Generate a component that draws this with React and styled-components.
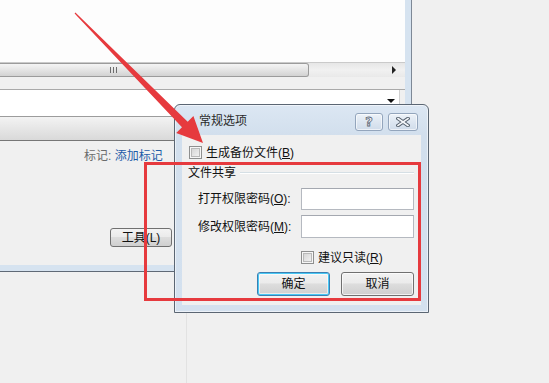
import React from "react";
import styled, { createGlobalStyle } from "styled-components";

const Global = createGlobalStyle`
  html, body { margin: 0; padding: 0; background: #f0f0f0; }
  #root { width: 549px; height: 383px; overflow: hidden; }
`;

const Page = styled.div`
  position: relative;
  width: 549px;
  height: 383px;
  display: flex;
  flex-direction: column;
  background: #f0f0f0;
  overflow: hidden;
  font-family: "Liberation Sans", "Noto Sans CJK SC", sans-serif;
  font-size: 12px;
  color: #1a1a1a;
`;

const TopRow = styled.div`
  display: flex;
  height: 272px;
`;

const DocWindow = styled.div`
  width: 412px;
  height: 272px;
  box-sizing: border-box;
  padding: 0 6px 6px 0;
  background: #d6e3f0;
  border-right: 1px solid #7d8896;
  border-bottom: 1px solid #5f6976;
  display: flex;
`;

const Pane = styled.div`
  flex: 1;
  display: flex;
  flex-direction: column;
  background: #f0f0f0;
`;

const WhiteArea = styled.div`
  height: 62px;
  background: #fdfdfd;
  border-bottom: 1px solid #cacaca;
`;

const HScroll = styled.div`
  height: 14px;
  display: flex;
  background: linear-gradient(#e6e6e6, #f1f1f1 50%, #e9e9e9);
  padding-right: 5px;
`;

const Thumb = styled.div`
  width: 309px;
  box-sizing: border-box;
  border: 1px solid #9b9b9b;
  border-left: none;
  border-radius: 0 3px 3px 0;
  background: linear-gradient(#f4f4f4, #e4e4e4 50%, #d2d2d2);
  display: flex;
  align-items: center;
  padding-left: 110px;
  gap: 2px;
`;

const Grip = styled.span`
  width: 1px;
  height: 6px;
  background: #6c6c6c;
`;

const ScrollSpacer = styled.div`
  flex: 1;
`;

const ScrollArrow = styled.div`
  width: 12px;
  display: flex;
  align-items: center;
  justify-content: center;
  &::after {
    content: "";
    border-left: 4px solid #222;
    border-top: 4px solid transparent;
    border-bottom: 4px solid transparent;
  }
`;

const Strip = styled.div`
  height: 12px;
  background: #f0f0f0;
  border-bottom: 1px solid #a9a9a9;
`;

const ComboRow = styled.div`
  height: 26px;
  display: flex;
  border-bottom: 1px solid #9c9c9c;
`;

const Combo = styled.div`
  width: 400px;
  box-sizing: border-box;
  background: #fff;
  border-right: 1px solid #d0d0d0;
  display: flex;
  justify-content: flex-end;
  padding-right: 4px;
`;

const ComboArrow = styled.span`
  margin-top: 9px;
  width: 0;
  height: 0;
  border-top: 4px solid #111;
  border-left: 4px solid transparent;
  border-right: 4px solid transparent;
`;

const HeaderBar = styled.div`
  height: 23px;
  background: linear-gradient(#f3f3f3, #e6e6e6 50%, #d9d9d9);
  border-bottom: 1px solid #767676;
`;

const Content = styled.div`
  flex: 1;
  display: flex;
  flex-direction: column;
  padding-top: 8px;
`;

const TagLine = styled.div`
  padding-left: 84px;
  line-height: 14px;
  color: #6b6b6b;
  white-space: nowrap;
`;

const TagLink = styled.span`
  color: #1e5ca8;
`;

const ToolButton = styled.div`
  margin: auto 0 18px 110px;
  width: 62px;
  height: 19px;
  box-sizing: border-box;
  border: 1px solid #707070;
  border-radius: 3px;
  background: linear-gradient(#f3f3f3, #ebebeb 45%, #dddddd 50%, #cfcfcf);
  display: flex;
  align-items: center;
  justify-content: center;
  line-height: 14px;
  color: #111;
`;

const RightArea = styled.div`
  flex: 1;
  background: #f0f0f0;
`;

const BottomRow = styled.div`
  flex: 1;
  display: flex;
`;

const BottomLeft = styled.div`
  width: 187px;
  box-sizing: border-box;
  border-right: 1px solid #e2e2e2;
`;

/* ---------- dialog ---------- */

const Dialog = styled.div`
  position: absolute;
  left: 174px;
  top: 104px;
  width: 255px;
  height: 209px;
  box-sizing: border-box;
  border: 1px solid #5b6673;
  border-radius: 6px 6px 0 0;
  background: linear-gradient(#dce7f3, #d2dfed 30px, #d4e1ef);
  display: flex;
  flex-direction: column;
  box-shadow: inset 0 0 0 1px rgba(255, 255, 255, 0.55);
`;

const TitleBar = styled.div`
  height: 30px;
  box-sizing: border-box;
  display: flex;
  align-items: flex-start;
  padding: 8px 10px 0 24px;
`;

const Title = styled.div`
  flex: 1;
  line-height: 16px;
  color: #2a2a2a;
`;

const CaptionButtons = styled.div`
  display: flex;
  gap: 5px;
`;

const CaptionButton = styled.div`
  width: ${(p) => p.$w}px;
  height: 18px;
  box-sizing: border-box;
  border: 1px solid #93a5bc;
  border-radius: 3px;
  background: linear-gradient(#edf2f8, #dde6f1 50%, #d0dcea);
  box-shadow: inset 0 0 0 1px rgba(255, 255, 255, 0.6);
  display: flex;
  align-items: center;
  justify-content: center;
`;

const HelpGlyph = styled.span`
  font-family: "DejaVu Sans", sans-serif;
  font-weight: bold;
  font-size: 13px;
  line-height: 14px;
  color: #f4f6f9;
  -webkit-text-stroke: 0.8px #5c6877;
`;

const Body = styled.div`
  flex: 1;
  margin: 0 7px 7px 7px;
  background: #f0f0f0;
  display: flex;
  flex-direction: column;
  padding: 11px 7px 0 7px;
`;

const CheckRow = styled.div`
  display: flex;
  align-items: center;
  gap: 4px;
  height: 13px;
  margin-top: ${(p) => p.$mt || 0}px;
  padding-left: ${(p) => p.$pl || 0}px;
`;

const CheckBox = styled.span`
  width: 13px;
  height: 13px;
  box-sizing: border-box;
  border: 1px solid #8e8f8f;
  background: linear-gradient(135deg, #cfcfcf, #f8f8f8);
  box-shadow: inset 0 0 0 1px #f6f6f6, inset 0 0 0 2px #b9b9b9;
  flex: none;
`;

const Label = styled.span`
  line-height: 14px;
  white-space: nowrap;
  color: #111;
`;

const GroupHeader = styled.div`
  margin-top: 6px;
  height: 16px;
  display: flex;
  align-items: center;
  margin-left: -1px;
`;

const GroupLine = styled.span`
  flex: 1;
  margin-left: 4px;
  border-top: 1px solid #d5dfe5;
  border-bottom: 1px solid #ffffff;
`;

const FieldRow = styled.div`
  display: flex;
  align-items: center;
  height: ${(p) => p.$h}px;
  margin-top: ${(p) => p.$mt}px;
  padding-left: 9px;
`;

const TextInput = styled.div`
  margin-left: auto;
  width: 113px;
  height: 100%;
  box-sizing: border-box;
  background: #fff;
  border: 1px solid #b5b9c0;
  border-top-color: #a4a8b0;
`;

const ButtonRow = styled.div`
  margin-top: 8px;
  display: flex;
  justify-content: flex-end;
  gap: 11px;
`;

const DlgButton = styled.div`
  width: 73px;
  height: 24px;
  box-sizing: border-box;
  border: 1px solid ${(p) => (p.$default ? "#3c7fb1" : "#707070")};
  border-radius: 3px;
  background: linear-gradient(#f2f2f2, #ebebeb 45%, #dddddd 50%, #cfcfcf);
  box-shadow: ${(p) =>
    p.$default
      ? "inset 0 0 0 1px #48c8f5, inset 0 0 0 2px rgba(255,255,255,0.55)"
      : "inset 0 0 0 1px rgba(255,255,255,0.7)"};
  display: flex;
  align-items: center;
  justify-content: center;
  line-height: 14px;
  color: #111;
`;

/* ---------- annotations ---------- */

const RedBox = styled.div`
  position: absolute;
  left: 144px;
  top: 162px;
  width: 277px;
  height: 139px;
  box-sizing: border-box;
  border: 3px solid #e63a3e;
  pointer-events: none;
`;

const ArrowLayer = styled.svg`
  position: absolute;
  left: 0;
  top: 0;
  pointer-events: none;
`;

function CloseGlyph() {
  return (
    <svg width="14" height="10" viewBox="0 0 14 10">
      <path d="M2 1.5 L12 8.5 M12 1.5 L2 8.5" stroke="#56616e" strokeWidth="3.6" strokeLinecap="square" />
      <path d="M2 1.5 L12 8.5 M12 1.5 L2 8.5" stroke="#f5f7fa" strokeWidth="1.6" strokeLinecap="square" />
    </svg>
  );
}

export default function App() {
  return (
    <>
      <Global />
      <Page>
        <TopRow>
          <DocWindow>
            <Pane>
              <WhiteArea />
              <HScroll>
                <Thumb>
                  <Grip />
                  <Grip />
                  <Grip />
                </Thumb>
                <ScrollSpacer />
                <ScrollArrow />
              </HScroll>
              <Strip />
              <ComboRow>
                <Combo>
                  <ComboArrow />
                </Combo>
              </ComboRow>
              <HeaderBar />
              <Content>
                <TagLine>
                  标记: <TagLink>添加标记</TagLink>
                </TagLine>
                <ToolButton>工具(L)</ToolButton>
              </Content>
            </Pane>
          </DocWindow>
          <RightArea />
        </TopRow>
        <BottomRow>
          <BottomLeft />
        </BottomRow>

        <Dialog>
          <TitleBar>
            <Title>常规选项</Title>
            <CaptionButtons>
              <CaptionButton $w={28}>
                <HelpGlyph>?</HelpGlyph>
              </CaptionButton>
              <CaptionButton $w={30}>
                <CloseGlyph />
              </CaptionButton>
            </CaptionButtons>
          </TitleBar>
          <Body>
            <CheckRow>
              <CheckBox />
              <Label>
                生成备份文件(<u>B</u>)
              </Label>
            </CheckRow>
            <GroupHeader>
              <Label>文件共享</Label>
              <GroupLine />
            </GroupHeader>
            <FieldRow $h={22} $mt={7}>
              <Label>
                打开权限密码(<u>O</u>):
              </Label>
              <TextInput />
            </FieldRow>
            <FieldRow $h={23} $mt={5}>
              <Label>
                修改权限密码(<u>M</u>):
              </Label>
              <TextInput />
            </FieldRow>
            <CheckRow $mt={13} $pl={112}>
              <CheckBox />
              <Label>
                建议只读(<u>R</u>)
              </Label>
            </CheckRow>
            <ButtonRow>
              <DlgButton $default>确定</DlgButton>
              <DlgButton>取消</DlgButton>
            </ButtonRow>
          </Body>
        </Dialog>

        <RedBox />
        <ArrowLayer width="549" height="383" viewBox="0 0 549 383">
          <polygon
            fill="#e63a3e"
            points="74.6,13.4 75.4,12.6 187.7,121.7 193.4,116.1 203,143 176.2,132.9 182,127.3"
          />
        </ArrowLayer>
      </Page>
    </>
  );
}
